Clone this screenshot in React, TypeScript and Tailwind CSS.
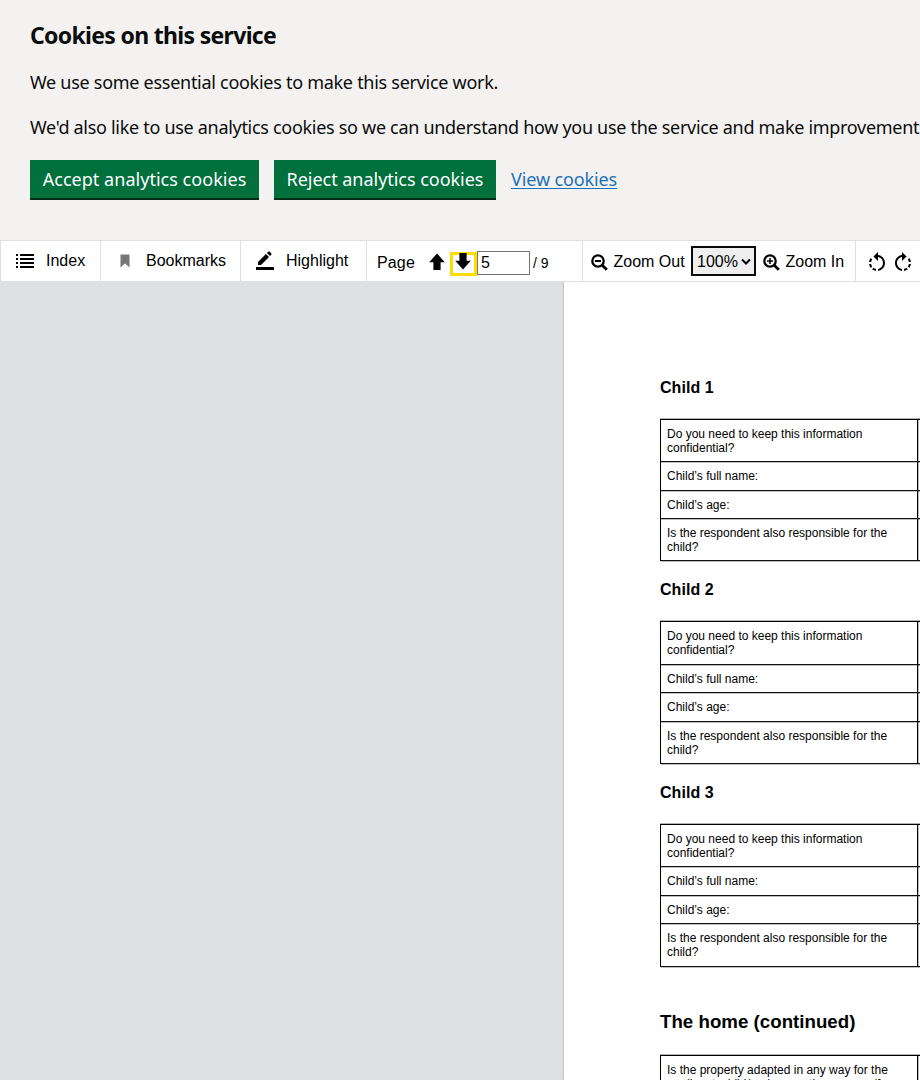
import React from "react";

const questions = [
  { text: "Do you need to keep this information confidential?", height: "h-[42.3px]" },
  { text: "Child’s full name:", height: "h-[28.4px]" },
  { text: "Child’s age:", height: "h-[28.4px]" },
  { text: "Is the respondent also responsible for the child?", height: "h-[42.4px]" },
];

function Row({ text, height }: { text: string; height: string }) {
  return (
    <div className={`flex border-b-[1.4px] border-[#111] shadow-[0_1px_0_rgba(0,0,0,0.25)] ${height}`}>
      <div className="w-[256px] shrink-0 pl-[6px] pt-[7px] pr-2 text-[12px] leading-[14px]">{text}</div>
      <div className="grow border-l border-black shadow-[1px_0_0_rgba(0,0,0,0.25)_inset]" />
    </div>
  );
}

function Child({ n }: { n: number }) {
  return (
    <section className="h-[202.6px]">
      <h3 className="h-[41px] text-[16px] font-bold leading-[20px] tracking-[0.05px]">Child {n}</h3>
      <div className="border-l border-t border-black shadow-[0_-1px_0_rgba(0,0,0,0.3)]">
        {questions.map((q) => (
          <Row key={q.text} {...q} />
        ))}
      </div>
    </section>
  );
}

function IndexIcon() {
  return (
    <svg className="ml-[15px] mr-3 shrink-0" width="18" height="16" viewBox="0 0 18 16" shapeRendering="crispEdges">
      {[1, 5, 9, 13].map((y) => (
        <path key={y} d={`M0 ${y}h2v2h-2zM4 ${y}h14v2h-14z`} />
      ))}
    </svg>
  );
}

function Arrow({ down = false }: { down?: boolean }) {
  return (
    <svg width="16" height="18" viewBox="0 0 16 18" className={down ? "shrink-0 rotate-180" : "shrink-0"}>
      <path d="M8 .5 15.8 9.2H11.6V17H4.4V9.2H.2Z" />
    </svg>
  );
}

function Magnifier({ plus = false }: { plus?: boolean }) {
  return (
    <svg width="17" height="17" viewBox="0 0 17 17" fill="none" stroke="black" className="shrink-0">
      <circle cx="7" cy="7" r="5.7" strokeWidth="2.3" />
      <path d="M4 7h6" strokeWidth={plus ? 1.5 : 2} />
      {plus && <path d="M7 4v6" strokeWidth="1.5" />}
      <path d="m11 11 4.8 4.8" strokeWidth="2.8" />
    </svg>
  );
}

function Rotate({ right = false }: { right?: boolean }) {
  return (
    <svg width="24" height="24" viewBox="0 0 24 24">
      {right ? (
        <path d="M15.55 5.55 11 1v3.07C7.06 4.56 4 7.92 4 12s3.05 7.44 7 7.93v-2.02c-2.84-.48-5-2.94-5-5.91s2.16-5.43 5-5.91V10l4.55-4.45zM19.93 11c-.17-1.39-.72-2.73-1.62-3.89l-1.42 1.42c.54.75.88 1.6 1.02 2.47h2.02zM13 17.9v2.02c1.39-.17 2.74-.71 3.9-1.61l-1.44-1.44c-.75.54-1.59.89-2.46 1.03zm3.89-2.42 1.42 1.41c.9-1.16 1.45-2.5 1.62-3.89h-2.02c-.14.87-.48 1.72-1.02 2.48z" />
      ) : (
        <path d="M7.11 8.53 5.7 7.11C4.8 8.27 4.24 9.61 4.07 11h2.02c.14-.87.49-1.72 1.02-2.47zM6.09 13H4.07c.17 1.39.72 2.73 1.62 3.89l1.41-1.42c-.52-.75-.87-1.59-1.01-2.47zm1.01 5.32c1.16.9 2.51 1.44 3.9 1.61V17.9c-.87-.15-1.71-.49-2.46-1.03L7.1 18.32zM13 4.07V1L8.45 5.55 13 10V6.09c2.84.48 5 2.94 5 5.91s-2.16 5.43-5 5.91v2.02c3.95-.49 7-3.85 7-7.93s-3.05-7.44-7-7.93z" />
      )}
    </svg>
  );
}

export default function App() {
  return (
    <div className="flex h-[1080px] w-[920px] flex-col overflow-hidden bg-white font-['Liberation_Sans',sans-serif] text-black">
      <section className="h-[240px] shrink-0 bg-[#f3f2f1] pl-[30px] pt-5 font-['Noto_Sans',sans-serif] text-[18px] text-[#0b0c0c]">
        <h2 className="h-[50px] whitespace-nowrap text-[23px] font-bold leading-[30px] tracking-[-0.68px]">Cookies on this service</h2>
        <p className="h-[45px] whitespace-nowrap leading-[24px] tracking-[-0.28px]">We use some essential cookies to make this service work.</p>
        <p className="h-[45px] whitespace-nowrap leading-[24px] tracking-[-0.3px]">We'd also like to use analytics cookies so we can understand how you use the service and make improvements.</p>
        <div className="flex gap-[15px] leading-[39px] tracking-[0.03px]">
          <button className="flex h-10 w-[229px] justify-center whitespace-nowrap border-b-2 border-[#002d18] bg-[#00703c] text-white">Accept analytics cookies</button>
          <button className="flex h-10 w-[222px] justify-center whitespace-nowrap border-b-2 border-[#002d18] bg-[#00703c] tracking-[-0.03px] text-white">Reject analytics cookies</button>
          <a className="whitespace-nowrap tracking-[-0.12px] text-[#1d70b8] underline decoration-1 underline-offset-2">View cookies</a>
        </div>
      </section>
      <div className="flex h-[42px] shrink-0 border-y border-l border-[#dee0e2] text-[16px] leading-[40px]">
        <div className="flex w-[100px] shrink-0 border-r border-[#dee0e2] [&>svg]:self-center">
          <IndexIcon />
          Index
        </div>
        <div className="flex w-[140px] shrink-0 border-r border-[#dee0e2] [&>svg]:self-center">
          <svg className="ml-[19px] mr-4 shrink-0" width="10" height="14" viewBox="0 0 10 14">
            <path d="M.5 .5h9v13L5 9.5 .5 13.5z" fill="#777" />
          </svg>
          Bookmarks
        </div>
        <div className="flex w-[126px] shrink-0 border-r border-[#dee0e2] [&>svg]:self-center">
          <svg className="ml-[15px] mr-3 shrink-0" width="18" height="20" viewBox="0 0 18 20">
            <path d="M0 16h18v3H0zM2 14v-3l8-8 3 3-8 8zM11 2l1.2-1.2q.8-.7 1.6 0l1.4 1.4q.7.8 0 1.6L14 5z" />
          </svg>
          Highlight
        </div>
        <div className="flex w-[216px] shrink-0 items-center border-r border-[#dee0e2] pl-[10px] leading-[38px]">
          <span className="mr-[14px] pt-[3px] tracking-[0.15px]">Page</span>
          <span className="flex pt-px"><Arrow /></span>
          <span className="ml-[5px] mt-[6px] flex h-6 w-[27px] items-start justify-center border-[3px] border-[#ffdd00]">
            <span className="-mt-[3px] flex"><Arrow down /></span>
          </span>
          <span className="mt-[3px] h-6 w-[53px] border border-[#767676] pl-[3px] leading-[22px]">5</span>
          <span className="ml-[3px] pt-1 text-[14px]">/ 9</span>
        </div>
        <div className="flex w-[273px] shrink-0 items-center border-r border-[#dee0e2] pl-2 leading-[38px]">
          <span className="flex pt-[2px]"><Magnifier /></span>
          <span className="ml-[5.5px] w-[77.5px] whitespace-nowrap pt-[2px]">Zoom Out</span>
          <span className="flex h-[30px] w-[65px] items-center border-2 border-[#0b0c0c] bg-[#efefef] pl-1">
            <span className="pt-px">100%</span>
            <svg className="ml-[3px] mt-px" width="10" height="8" viewBox="0 0 10 8" fill="none" stroke="black" strokeWidth="2"><path d="m1 1.5 4 4 4-4" /></svg>
          </span>
          <span className="ml-[7px] flex pt-[2px]"><Magnifier plus /></span>
          <span className="ml-[5.5px] whitespace-nowrap pt-[2px]">Zoom In</span>
        </div>
        <div className="flex shrink-0 items-center gap-[2px] pl-[9px] pt-[3px]">
          <Rotate />
          <Rotate right />
        </div>
      </div>
      <main className="flex min-h-0 grow overflow-hidden bg-[#dee0e2]">
        <div className="ml-[564px] w-[356px] bg-white pl-[96px] pt-[95.9px] shadow-[0_0_2px_rgba(0,0,0,0.35)]">
          <Child n={1} />
          <Child n={2} />
          <Child n={3} />
          <h2 className="mt-[24.4px] h-[45px] whitespace-nowrap text-[18.67px] font-bold leading-[24px] tracking-[0.03px]">The home (continued)</h2>
          <div className="border-l border-t border-black shadow-[0_-1px_0_rgba(0,0,0,0.3)]">
            <Row text="Is the property adapted in any way for the applicant, child(ren) or another person (for" height="h-[60px]" />
          </div>
        </div>
      </main>
    </div>
  );
}
